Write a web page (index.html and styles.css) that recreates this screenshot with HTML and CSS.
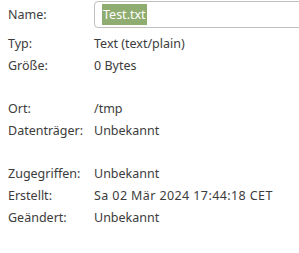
FILE: index.html
```html
<!DOCTYPE html>
<html lang="de">

<head>
    <meta charset="UTF-8">
    <title>Eigenschaften</title>
    <link rel="stylesheet" href="styles.css">
</head>

<body>
    <section class="props">
        <!-- Name -->
        <div class="row name-row">
            <div class="label">Name:</div>
            <div class="name-box"><span class="selected">Test.txt</span></div>
        </div>

        <!-- Type and size -->
        <div class="group">
            <div class="row">
                <div class="label">Typ:</div>
                <div class="value">Text (text/plain)</div>
            </div>
            <div class="row">
                <div class="label">Größe:</div>
                <div class="value">0 Bytes</div>
            </div>
        </div>

        <!-- Location -->
        <div class="group">
            <div class="row">
                <div class="label">Ort:</div>
                <div class="value">/tmp</div>
            </div>
            <div class="row">
                <div class="label">Datenträger:</div>
                <div class="value">Unbekannt</div>
            </div>
        </div>

        <!-- Times -->
        <div class="group">
            <div class="row">
                <div class="label">Zugegriffen:</div>
                <div class="value">Unbekannt</div>
            </div>
            <div class="row">
                <div class="label">Erstellt:</div>
                <div class="value date">Sa 02 Mär 2024 17:44:18 CET</div>
            </div>
            <div class="row">
                <div class="label">Geändert:</div>
                <div class="value">Unbekannt</div>
            </div>
        </div>
    </section>
</body>

</html>
```

FILE: styles.css
```css
* {
    margin: 0;
    padding: 0;
    box-sizing: border-box;
}

body {
    background: #fff;
    color: #3c3c3c;
    font-family: "Noto Sans", "DejaVu Sans", sans-serif;
    font-size: 12.5px;
    overflow: hidden;
}

.props {
    display: flex;
    flex-direction: column;
    gap: 21.7px;
    padding: 1px 0 0 8px;
}

.group {
    display: flex;
    flex-direction: column;
}

.row {
    display: flex;
    align-items: center;
    height: 21.7px;
}

.label {
    width: 86px;
    flex-shrink: 0;
}

/* digits run a bit wider in the original font */
.date {
    letter-spacing: 0.4px;
}

/* Name entry, selected text */
.name-row {
    height: 27px;
    margin-bottom: -17px;
}

.name-box {
    flex: 1;
    height: 27px;
    margin-right: -10px;
    border: 1px solid #bfbfbf;
    border-radius: 4px;
    padding: 0 0 0 7px;
    display: flex;
    align-items: center;
}

.selected {
    background: #8fad70;
    color: #fff;
    padding: 2px 1px;
}
```
